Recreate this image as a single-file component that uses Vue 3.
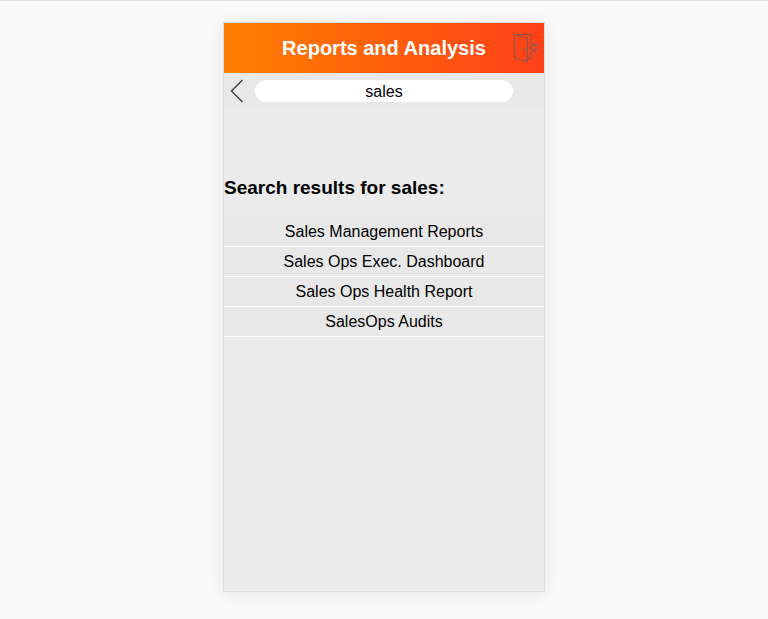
<script setup>
import { ref } from 'vue'
const query = ref('sales')
const results = ['Sales Management Reports', 'Sales Ops Exec. Dashboard', 'Sales Ops Health Report', 'SalesOps Audits']
</script>

<template>
  <div class="page">
    <main class="phone">
      <header class="title-bar">
        <h1>Reports and Analysis</h1>
        <button class="exit" type="button" aria-label="Log out">
          <svg width="28" height="30" viewBox="0 0 28 30" fill="none" stroke="#8a5a50" stroke-width="1.2" stroke-linejoin="round">
            <path d="M2.500 1.500h16.500V11M19 18v7.500h-3M2.500 1.500 15.500 5v23.500L2.500 25z" />
            <path d="M12.500 15v3M11 16.500h3" />
            <path d="M22.500 10 18 14.500l4.500 4.500v-3H27M27 12.500h-4.500V10" />
          </svg>
        </button>
      </header>
      <form class="search-bar" @submit.prevent>
        <button class="back" type="button" aria-label="Back">
          <svg width="14" height="24" viewBox="0 0 14 24" fill="none" stroke="#444" stroke-width="1.500"><path d="M12.500 1 1.500 12l11 11" /></svg>
        </button>
        <input v-model="query" type="text" aria-label="Search reports" />
      </form>
      <h2>Search results for {{ query }}:</h2>
      <ul>
        <li v-for="item in results" :key="item"><a href="#">{{ item }}</a></li>
      </ul>
    </main>
  </div>
</template>

<style>
body { margin: 0; background: #f9f9f9; }
</style>
<style scoped>
.page { box-sizing: border-box; min-height: 100vh; padding: 21px 16px 27px; border-top: 1px solid #e0e0e0; display: flex; justify-content: center; font: 16px/20px "Liberation Sans", Arial, sans-serif; color: #000; }
.phone { box-sizing: border-box; width: 100%; max-width: 322px; border: 1px solid #dedede; background: #ebebeb; box-shadow: 0 2px 16px rgba(0,0,0,.08); }
.title-bar { display: grid; grid-template-columns: 32px 1fr 32px; align-items: center; height: 50px; background: linear-gradient(90deg, #ff8000, #ff4018); }
h1 { grid-column: 2; margin: 0; text-align: center; color: #fff; font-size: 20px; line-height: 24px; }
button { padding: 0; border: 0; background: none; display: flex; }
.search-bar { display: flex; align-items: center; height: 35px; padding: 1px 31px 0 6px; background: #e8e8e8; box-sizing: border-box; }
.back { width: 25px; }
input { flex: 1; min-width: 0; box-sizing: border-box; height: 22px; padding: 2px 8px 0; border: 0; border-radius: 11px; background: #fff; font: inherit; text-align: center; color: #000; }
h2 { margin: 68px 0 17px; font-size: 19px; line-height: 24px; }
ul { margin: 0; padding: 0; list-style: none; }
li { border-bottom: 1px solid #fff; background: #e8e8e8; text-align: center; }
a { display: block; padding: 5px 0 4px; color: inherit; text-decoration: none; }
</style>
